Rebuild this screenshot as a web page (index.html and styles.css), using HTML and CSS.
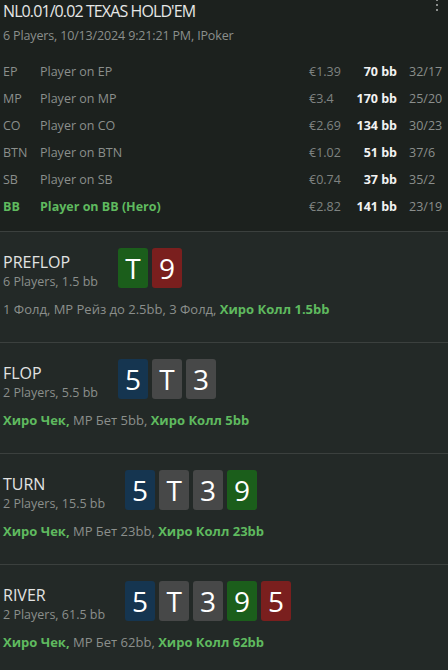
FILE: index.html
```html
<!DOCTYPE html>
<html>
<head>
  <title>Hand History</title>
  <link rel="stylesheet" href="styles.css">
</head>
<body>
  <div class="hand">
    <div class="summary">
      <div class="menu"><span></span><span></span><span></span></div>
      <h1 class="title">NL0.01/0.02 TEXAS HOLD'EM</h1>
      <div class="meta">6 Players, 10/13/2024 9:21:21 PM, IPoker</div>
      <div class="players">
        <div class="player">
          <span class="pos">EP</span><span class="name">Player on EP</span>
          <span class="money">€1.39</span><span class="stack">70 bb</span><span class="stats">32/17</span>
        </div>
        <div class="player">
          <span class="pos">MP</span><span class="name">Player on MP</span>
          <span class="money">€3.4</span><span class="stack">170 bb</span><span class="stats">25/20</span>
        </div>
        <div class="player">
          <span class="pos">CO</span><span class="name">Player on CO</span>
          <span class="money">€2.69</span><span class="stack">134 bb</span><span class="stats">30/23</span>
        </div>
        <div class="player">
          <span class="pos">BTN</span><span class="name">Player on BTN</span>
          <span class="money">€1.02</span><span class="stack">51 bb</span><span class="stats">37/6</span>
        </div>
        <div class="player">
          <span class="pos">SB</span><span class="name">Player on SB</span>
          <span class="money">€0.74</span><span class="stack">37 bb</span><span class="stats">35/2</span>
        </div>
        <div class="player hero">
          <span class="pos">BB</span><span class="name">Player on BB (Hero)</span>
          <span class="money">€2.82</span><span class="stack">141 bb</span><span class="stats">23/19</span>
        </div>
      </div>
    </div>

    <div class="street">
      <div class="street-head">
        <div class="street-info">
          <div class="street-name">PREFLOP</div>
          <div class="street-pot">6 Players, 1.5 bb</div>
        </div>
        <div class="cards">
          <span class="card green">T</span>
          <span class="card red">9</span>
        </div>
      </div>
      <div class="actions">1 Фолд, MP Рейз до 2.5bb, 3 Фолд, <b class="hero-act">Хиро Колл 1.5bb</b></div>
    </div>

    <div class="street">
      <div class="street-head">
        <div class="street-info">
          <div class="street-name">FLOP</div>
          <div class="street-pot">2 Players, 5.5 bb</div>
        </div>
        <div class="cards">
          <span class="card blue">5</span>
          <span class="card grey">T</span>
          <span class="card grey">3</span>
        </div>
      </div>
      <div class="actions"><b class="hero-act">Хиро Чек,</b> MP Бет 5bb, <b class="hero-act">Хиро Колл 5bb</b></div>
    </div>

    <div class="street">
      <div class="street-head">
        <div class="street-info">
          <div class="street-name">TURN</div>
          <div class="street-pot">2 Players, 15.5 bb</div>
        </div>
        <div class="cards">
          <span class="card blue">5</span>
          <span class="card grey">T</span>
          <span class="card grey">3</span>
          <span class="card green">9</span>
        </div>
      </div>
      <div class="actions"><b class="hero-act">Хиро Чек,</b> MP Бет 23bb, <b class="hero-act">Хиро Колл 23bb</b></div>
    </div>

    <div class="street">
      <div class="street-head">
        <div class="street-info">
          <div class="street-name">RIVER</div>
          <div class="street-pot">2 Players, 61.5 bb</div>
        </div>
        <div class="cards">
          <span class="card blue">5</span>
          <span class="card grey">T</span>
          <span class="card grey">3</span>
          <span class="card green">9</span>
          <span class="card red">5</span>
        </div>
      </div>
      <div class="actions"><b class="hero-act">Хиро Чек,</b> MP Бет 62bb, <b class="hero-act">Хиро Колл 62bb</b></div>
    </div>
  </div>
</body>
</html>
```

FILE: styles.css
```css
body {
  margin: 0;
  background-color: #232927;
  font-family: "Open Sans", "Noto Sans", sans-serif;
  color: #8b8f8c;
}
.hand {
  width: 448px;
}
.summary {
  position: relative;
  background-color: #1c211e;
  padding: 0 0 11px 3px;
}
.menu {
  position: absolute;
  top: -1px;
  right: 10px;
  display: flex;
  flex-direction: column;
  gap: 3px;
}
.menu span {
  width: 2px;
  height: 2px;
  background-color: #8a8d8b;
}
.title {
  margin: 0;
  font-size: 16px;
  font-weight: normal;
  line-height: 22px;
  letter-spacing: -0.9px;
  color: #e6e7e6;
}
.meta {
  margin-top: 5px;
  font-size: 12.5px;
  line-height: 18px;
  letter-spacing: -0.15px;
}
.players {
  margin-top: 13px;
}
.player {
  display: grid;
  grid-template-columns: 37px 1fr 44px 44px 51px;
  font-size: 12.5px;
  line-height: 27px;
  height: 27px;
}
.money {
  color: #7f8381;
}
.stack {
  text-align: right;
  font-weight: bold;
  color: #f2f2f2;
  white-space: nowrap;
}
.stats {
  padding-left: 12px;
}
.player.hero .pos,
.player.hero .name {
  color: #5fba5f;
  font-weight: bold;
}
.street {
  border-top: 1px solid #3b403e;
  padding: 16px 0 24px 3px;
}
.street-head {
  display: flex;
  align-items: flex-start;
  gap: 20px;
}
.street-info {
  padding-top: 3px;
}
.street-name {
  font-size: 16px;
  line-height: 22px;
  color: #e2e3e2;
}
.street-pot {
  font-size: 12.5px;
  line-height: 18px;
}
.cards {
  display: flex;
  gap: 4px;
}
.card {
  width: 30px;
  height: 40px;
  border-radius: 3px;
  color: #fff;
  font-size: 28px;
  line-height: 40px;
  text-align: center;
}
.card.green {
  background-color: #1b5e1b;
}
.card.red {
  background-color: #7a1f1e;
}
.card.blue {
  background-color: #153550;
}
.card.grey {
  background-color: #474848;
}
.actions {
  margin-top: 10px;
  font-size: 13px;
  line-height: 17px;
}
.hero-act {
  color: #5fba5f;
}
```
